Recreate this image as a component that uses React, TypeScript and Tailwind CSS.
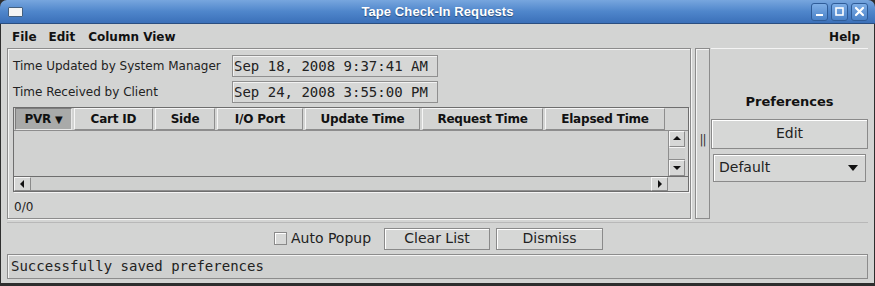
import React from "react";

const sans = { fontFamily: '"DejaVu Sans", Verdana, sans-serif' };
const mono = { fontFamily: '"DejaVu Sans Mono", "Liberation Mono", monospace' };

function HeaderCell({ w, label, pressed }: { w: number; label: string; pressed?: boolean }) {
  return (
    <div
      style={{ width: w }}
      className={`h-[22px] shrink-0 flex items-center justify-center text-[12px] font-bold text-[#111] tracking-[-0.2px] border-t border-l border-b border-r ${
        pressed
          ? "bg-[#a9aaa9] border-t-[#7d7d7d] border-l-[#7d7d7d] border-b-[#e8e8e8] border-r-[#e8e8e8]"
          : "bg-[#d3d4d3] border-t-[#f6f6f6] border-l-[#f6f6f6] border-b-[#8d8d8d] border-r-[#8d8d8d]"
      }`}
    >
      {label}
      {pressed && <span className="ml-[4px] text-[10px]">▼</span>}
    </div>
  );
}

function ArrowBtn({ dir, className }: { dir: "up" | "down" | "left" | "right"; className?: string }) {
  const paths: Record<string, string> = {
    up: "M1 6 L5 2 L9 6 Z",
    down: "M1 3 L9 3 L5 7 Z",
    left: "M6 1 L6 9 L2 5 Z",
    right: "M3 1 L3 9 L7 5 Z",
  };
  return (
    <div
      className={`flex items-center justify-center bg-[#d6d7d6] border-t border-l border-b border-r border-t-[#f6f6f6] border-l-[#f6f6f6] border-b-[#8a8a8a] border-r-[#8a8a8a] ${className ?? ""}`}
    >
      <svg width="10" height="10" viewBox="0 0 10 10">
        <path d={paths[dir]} fill="#111" />
      </svg>
    </div>
  );
}

function Field({ text }: { text: string }) {
  return (
    <div
      style={mono}
      className="w-[206px] h-[22px] flex items-center pl-[1px] text-[14px] text-[#222] bg-[#d6d7d6] border border-[#8f8f8f] shadow-[inset_1px_1px_0_#f2f2f2]"
    >
      {text}
    </div>
  );
}

export default function App() {
  return (
    <div style={sans} className="w-[875px] h-[286px] bg-[#2e2e2e] flex flex-col overflow-hidden">
      {/* Title bar */}
      <div className="h-[24px] shrink-0 rounded-t-[7px] bg-gradient-to-b from-[#77a6de] via-[#4f86cb] to-[#3b70b9] border-b border-[#2a4e80] flex items-center relative">
        <div className="ml-[8px] w-[15px] h-[10px] bg-[#f4f4f4] border border-[#44607f] rounded-[1px]" />
        <div
          style={{ fontFamily: '"Liberation Sans", Arial, sans-serif' }}
          className="absolute left-0 right-0 top-0 h-[24px] flex items-center justify-center text-white font-bold text-[13px] tracking-[0.1px] [text-shadow:0_1px_1px_#274a78]"
        >
          Tape Check-In Requests
        </div>
        <div className="ml-auto mr-[7px] flex gap-[3px] relative">
          {["min", "max", "close"].map((k) => (
            <div
              key={k}
              className="w-[17px] h-[18px] rounded-[3px] border border-[#2f5c98] bg-gradient-to-b from-[#7eaee6] to-[#4a82c8] flex items-center justify-center"
            >
              <svg width="11" height="11" viewBox="0 0 11 11">
                {k === "min" && <rect x="2" y="8" width="7" height="2" fill="#fff" />}
                {k === "max" && <rect x="2" y="2" width="7" height="7" fill="none" stroke="#fff" strokeWidth="1.6" />}
                {k === "close" && (
                  <path d="M2 2 L9 9 M9 2 L2 9" stroke="#fff" strokeWidth="2.2" strokeLinecap="round" />
                )}
              </svg>
            </div>
          ))}
        </div>
      </div>

      {/* Body */}
      <div className="flex-1 mx-[1px] mb-[3px] bg-[#d3d4d3] flex flex-col">
        {/* Menu bar */}
        <div className="h-[23px] shrink-0 flex items-center pt-[2px] px-[11px] text-[12px] font-bold text-[#111]">
          <span>File</span>
          <span className="ml-[12px]">Edit</span>
          <span className="ml-[13px]">Column View</span>
          <span className="ml-auto mr-[3px]">Help</span>
        </div>

        {/* Main split */}
        <div className="flex h-[171px] ml-[6px] mr-[6px] mt-[1px]">
          {/* Left panel */}
          <div className="w-[684px] border border-[#8c8c8c] shadow-[inset_1px_1px_0_#f4f4f4,1px_1px_0_#f4f4f4] flex flex-col pl-[5px] pr-[2px] pt-[6px]">
            <div className="flex items-center h-[22px]">
              <span className="w-[219px] text-[12px] text-[#222]">Time Updated by System Manager</span>
              <Field text="Sep 18, 2008 9:37:41 AM" />
            </div>
            <div className="flex items-center h-[22px] mt-[4px]">
              <span className="w-[219px] text-[12px] text-[#222]">Time Received by Client</span>
              <Field text="Sep 24, 2008 3:55:00 PM" />
            </div>
            {/* Table */}
            <div className="mt-[4px] w-[676px] h-[85px] border border-[#6e6e6e] shadow-[1px_1px_0_#f4f4f4] flex flex-col">
              <div className="flex gap-[2px] pl-[1px] h-[23px] border-b border-[#8d8d8d]">
                <HeaderCell w={57} label="PVR" pressed />
                <HeaderCell w={79} label="Cart ID" />
                <HeaderCell w={60} label="Side" />
                <HeaderCell w={86} label="I/O Port" />
                <HeaderCell w={115} label="Update Time" />
                <HeaderCell w={121} label="Request Time" />
                <HeaderCell w={120} label="Elapsed Time" />
              </div>
              <div className="flex flex-1">
                <div className="w-[654px] bg-[#d1d2d1]" />
                <div className="w-[17px] flex flex-col border-l border-[#8d8d8d]">
                  <ArrowBtn dir="up" className="h-[16px]" />
                  <div className="flex-1 bg-[#cfd0cf] border-b border-[#8d8d8d] shadow-[inset_0_1px_0_#f4f4f4]" />
                  <ArrowBtn dir="down" className="h-[16px]" />
                </div>
              </div>
              <div className="flex h-[15px] border-t border-[#6e6e6e]">
                <ArrowBtn dir="left" className="w-[17px]" />
                <div className="w-[620px] bg-[#cfd0cf] border-b border-[#8d8d8d]" />
                <ArrowBtn dir="right" className="w-[17px]" />
                <div className="flex-1 bg-[#d3d4d3]" />
              </div>
            </div>
            <div className="mt-[6px] ml-[1px] text-[12px] text-[#222]">0/0</div>
          </div>

          {/* Splitter */}
          <div className="w-[4px]" />
          <div className="w-[15px] border border-[#8c8c8c] shadow-[inset_1px_1px_0_#f4f4f4] flex items-center justify-center">
            <span className="text-[12px] text-[#333] mt-[12px] tracking-[-1px]">||</span>
          </div>
          <div className="w-[1px]" />

          {/* Right panel */}
          <div className="flex-1 flex flex-col border-t border-[#f4f4f4] pt-[43px]">
            <div className="text-center text-[13px] font-bold text-[#111]">Preferences</div>
            <div className="mt-[7px] h-[30px] border border-[#8a8a8a] shadow-[inset_1px_1px_0_#fff] bg-[#d6d7d6] flex items-center justify-center text-[14px] text-[#222]">
              Edit
            </div>
            <div className="mt-[5px] mx-[2px] h-[28px] border border-[#8a8a8a] shadow-[inset_1px_1px_0_#fff] bg-[#d6d7d6] flex items-center pl-[5px] pr-[6px] text-[14px] text-[#222]">
              <span>Default</span>
              <svg className="ml-auto" width="12" height="8" viewBox="0 0 12 8">
                <path d="M1 1 L11 1 L6 7 Z" fill="#111" />
              </svg>
            </div>
          </div>
        </div>

        {/* Bottom buttons */}
        <div className="mt-[3px] mx-[6px] border-t border-[#b8b8b8] shadow-[inset_0_1px_0_#f0f0f0]" />
        <div className="h-[31px] flex items-center justify-center gap-[6px] pl-[2px]">
          <div className="flex items-center mr-[7px]">
            <div className="w-[13px] h-[13px] border border-[#8a8a8a] bg-[#d8d9d8] shadow-[inset_1px_1px_0_#fff]" />
            <span className="ml-[4px] text-[14px] text-[#222]">Auto Popup</span>
          </div>
          <div className="w-[106px] h-[22px] border border-[#8a8a8a] shadow-[inset_1px_1px_0_#fff] bg-[#d6d7d6] flex items-center justify-center text-[14px] text-[#222]">
            Clear List
          </div>
          <div className="w-[107px] h-[22px] border border-[#8a8a8a] shadow-[inset_1px_1px_0_#fff] bg-[#d6d7d6] flex items-center justify-center text-[14px] text-[#222]">
            Dismiss
          </div>
        </div>

        {/* Status bar */}
        <div
          style={mono}
          className="mx-[6px] h-[25px] border border-[#8c8c8c] shadow-[inset_1px_1px_0_#f4f4f4] bg-[#cfd0cf] flex items-center pl-[3px] text-[14px] text-[#222]"
        >
          Successfully saved preferences
        </div>
      </div>
    </div>
  );
}
